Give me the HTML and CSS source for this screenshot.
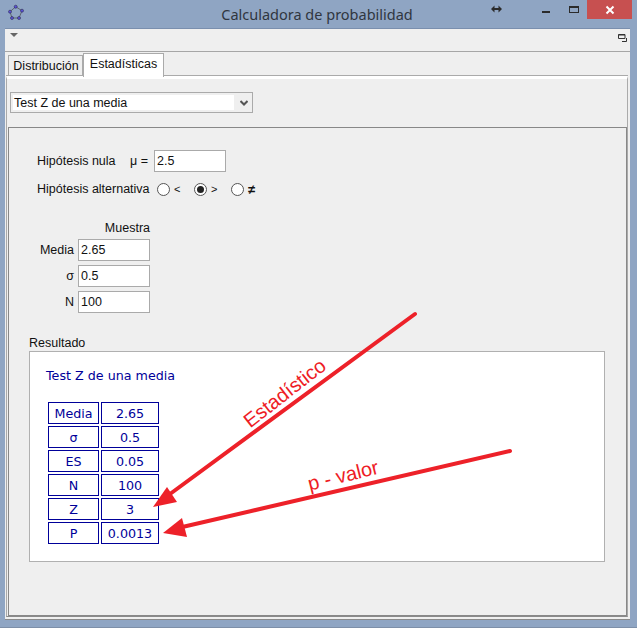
FILE: index.html
```html
<!DOCTYPE html>
<html lang="es">
<head>
    <meta charset="UTF-8">
    <meta name="viewport" content="width=device-width, initial-scale=1.0">
    <title>Calculadora de probabilidad</title>
    <link rel="stylesheet" href="styles.css">
</head>
<body>
    <div class="window">
        <div class="titlebar">
            <svg class="app-icon" width="18" height="18" viewBox="0 0 18 18">
                <path d="M8.7 2.7 L15 6.7 L12 14 L5 14 L3 7.7 Z" fill="none" stroke="#5f6670" stroke-width="1"/>
                <g fill="#5a50d8" stroke="#2c2c50" stroke-width="0.6">
                    <circle cx="8.7" cy="2.7" r="1.5"/>
                    <circle cx="15" cy="6.7" r="1.5"/>
                    <circle cx="12" cy="14" r="1.5"/>
                    <circle cx="5" cy="14" r="1.5"/>
                    <circle cx="3" cy="7.7" r="1.5"/>
                </g>
            </svg>
            <div class="title">Calculadora de probabilidad</div>
            <div class="controls">
                <svg class="ctl-resize" width="11" height="8" viewBox="0 0 11 8">
                    <path d="M0 4 L3.5 0.5 V3 H7.5 V0.5 L11 4 L7.5 7.5 V5 H3.5 V7.5 Z" fill="#2b2b2b"/>
                </svg>
                <span class="ctl-min"></span>
                <span class="ctl-max"></span>
                <div class="ctl-close">
                    <svg width="10" height="10" viewBox="0 0 10 10">
                        <path d="M1.5 1.5 L8.5 8.5 M8.5 1.5 L1.5 8.5" stroke="#fff" stroke-width="2"/>
                    </svg>
                </div>
            </div>
        </div>

        <div class="content">
            <div class="menubar">
                <span class="menu-arrow"></span>
                <svg width="9" height="8" viewBox="0 0 9 8">
                    <path d="M0.5 0.5 H7 V4.5 H0.5 Z M0.5 1 H7" fill="none" stroke="#333"/>
                    <path d="M8.5 4 V7.5 H4" fill="none" stroke="#333"/>
                </svg>
            </div>

            <div class="tabs">
                <div class="tab">Distribución</div>
                <div class="tab active">Estadísticas</div>
            </div>

            <div class="tab-pane">
                <div class="select">
                    <div class="select-value">Test Z de una media</div>
                    <svg width="8" height="6" viewBox="0 0 8 6">
                        <path d="M0.5 1 L4 4.5 L7.5 1" fill="none" stroke="#555" stroke-width="2"/>
                    </svg>
                </div>

                <div class="panel">
                    <div class="row">
                        <span class="lbl-null">Hipótesis nula</span>
                        <span class="lbl-mu">μ =</span>
                        <div class="field">2.5</div>
                    </div>
                    <div class="row row-alt">
                        <span class="lbl-alt">Hipótesis alternativa</span>
                        <span class="radio"></span><span class="radio-lbl">&lt;</span>
                        <span class="radio checked"></span><span class="radio-lbl">&gt;</span>
                        <span class="radio"></span><span class="radio-lbl neq">≠</span>
                    </div>

                    <div class="sample">
                        <span></span><span class="sample-head">Muestra</span>
                        <span class="sample-lbl">Media</span><div class="field">2.65</div>
                        <span class="sample-lbl">σ</span><div class="field">0.5</div>
                        <span class="sample-lbl">N</span><div class="field">100</div>
                    </div>

                    <div class="result-lbl">Resultado</div>
                    <div class="result">
                        <div class="result-title">Test Z de una media</div>
                        <table class="result-table">
                            <tr><td class="c-name">Media</td><td class="c-val">2.65</td></tr>
                            <tr><td class="c-name">σ</td><td class="c-val">0.5</td></tr>
                            <tr><td class="c-name">ES</td><td class="c-val">0.05</td></tr>
                            <tr><td class="c-name">N</td><td class="c-val">100</td></tr>
                            <tr><td class="c-name">Z</td><td class="c-val">3</td></tr>
                            <tr><td class="c-name">P</td><td class="c-val">0.0013</td></tr>
                        </table>
                    </div>
                </div>
            </div>
        </div>
    </div>

    <!-- red notes drawn over the window -->
    <svg class="arrows" width="639" height="630" viewBox="0 0 639 630">
        <g stroke="#ed2129" stroke-width="4" stroke-linecap="round" fill="none">
            <path d="M415 314 L170 494"/>
            <path d="M510 451 L178 528"/>
        </g>
        <g fill="#ed2129">
            <path d="M153 507 L167 487 L177 502 Z"/>
            <path d="M163 533 L182 518 L187 537 Z"/>
        </g>
    </svg>
    <div class="note note-stat">Estadístico</div>
    <div class="note note-p">p - valor</div>
</body>
</html>
```

FILE: styles.css
```css
html, body {
    margin: 0;
    padding: 0;
    background-color: #fff;
}
body {
    position: relative;
    width: 639px;
    height: 630px;
    overflow: hidden;
    font-family: "Liberation Sans", Arial, sans-serif;
    font-size: 12.5px;
    color: #111;
}
.window {
    width: 637px;
    height: 628px;
    box-sizing: border-box;
    padding: 0 7px 7px 5px;
    background-color: #8fa5c3;
    border-bottom: 1px solid #7d8fa8;
    display: flex;
    flex-direction: column;
}

/* title bar */
.titlebar {
    height: 28px;
    flex-shrink: 0;
    position: relative;
    display: flex;
    justify-content: center;
}
.app-icon {
    position: absolute;
    left: 2px;
    top: 4px;
}
.title {
    font-family: "Noto Sans", sans-serif;
    font-size: 14.5px;
    line-height: 28px;
    color: #30363f;
    margin-right: 1px;
}
.controls {
    position: absolute;
    left: 486px;
    top: 0;
    display: flex;
}
.ctl-resize {
    margin-top: 5px;
}
.ctl-min {
    width: 8px;
    height: 2px;
    margin: 11px 0 0 40px;
    background-color: #2b2b2b;
}
.ctl-max {
    width: 8px;
    height: 4px;
    margin: 6px 0 0 19px;
    border: 1px solid #2b2b2b;
    border-top-width: 2px;
}
.ctl-close {
    width: 45px;
    height: 19px;
    margin-left: 8px;
    background-color: #c75050;
    display: flex;
    align-items: center;
    justify-content: center;
}

/* window body */
.content {
    flex: 1;
    min-height: 0;
    background-color: #efefef;
    border-top: 1px solid #7a8fae;
    border-bottom: 1px solid #8a8a8a;
    display: flex;
    flex-direction: column;
}
.menubar {
    height: 23px;
    flex-shrink: 0;
    box-sizing: border-box;
    border-bottom: 1px solid #a6a6a6;
    padding: 5px 3px 0 5px;
    display: flex;
    justify-content: space-between;
    align-items: flex-start;
}
.menu-arrow {
    width: 0;
    height: 0;
    margin-top: -1px;
    border-left: 4px solid transparent;
    border-right: 4px solid transparent;
    border-top: 4px solid #666;
}

/* tabs */
.tabs {
    height: 24px;
    flex-shrink: 0;
    padding-left: 3px;
    display: flex;
    align-items: flex-end;
}
.tab {
    height: 21px;
    width: 75px;
    box-sizing: border-box;
    border: 1px solid #aaa;
    border-bottom: 0;
    padding-left: 1px;
    text-align: center;
    line-height: 21px;
    background-color: #efefef;
}
.tab.active {
    height: 24px;
    width: 81px;
    padding-left: 0;
    background-color: #fff;
    position: relative;
    top: 1px;
}
.tab-pane {
    flex: 1;
    min-height: 0;
    margin: 0 2px 2px 1px;
    border: 1px solid #aaa;
    border-bottom-color: #8a8a8a;
    border-top: 3px solid #fff;
    box-shadow: 0 -1px 0 #aaa;
    display: flex;
    flex-direction: column;
}
.select {
    width: 243px;
    height: 21px;
    box-sizing: border-box;
    margin: 13px 0 0 3px;
    border: 1px solid #aaa;
    padding: 2px 4px 2px 2px;
    display: flex;
    align-items: center;
    justify-content: space-between;
}
.select-value {
    width: 221px;
    height: 15px;
    line-height: 17px;
    padding-left: 1px;
    box-sizing: border-box;
    background-color: #fff;
}

/* main panel */
.panel {
    flex: 1;
    margin: 14px 0 0 1px;
    border: 1px solid #888;
    padding: 22px 0 0 28px;
    min-height: 0;
}
.row {
    display: flex;
    align-items: center;
}
.lbl-null {
    width: 93px;
}
.lbl-mu {
    width: 24px;
}
.lbl-alt {
    width: 120px;
}
.field {
    width: 72px;
    height: 22px;
    box-sizing: border-box;
    border: 1px solid #aaa;
    background-color: #fff;
    padding-left: 2px;
    line-height: 21px;
}
.row-alt {
    margin-top: 6px;
    height: 22px;
}
.radio {
    width: 13px;
    height: 13px;
    box-sizing: border-box;
    border: 1px solid #555;
    border-radius: 50%;
    background-color: #fff;
    display: inline-flex;
    align-items: center;
    justify-content: center;
}
.radio.checked::after {
    content: "";
    width: 7px;
    height: 7px;
    border-radius: 50%;
    background-color: #222;
}
.radio-lbl {
    width: 20px;
    margin-left: 4px;
    font-size: 11px;
}
.radio-lbl.neq {
    font-size: 13px;
    font-weight: bold;
}
.sample {
    margin: 13px 0 0 -2px;
    display: grid;
    grid-template-columns: 39px 72px;
    grid-auto-rows: 22px;
    row-gap: 4px;
    column-gap: 4px;
}
.sample-head {
    text-align: right;
    line-height: 17px;
    margin-top: 7px;
}
.sample-lbl {
    text-align: right;
    line-height: 23px;
}
.result-lbl {
    margin: 23px 0 0 -8px;
    line-height: 14px;
}
.result {
    width: 576px;
    height: 211px;
    box-sizing: border-box;
    margin: 1px 0 0 -8px;
    border: 1px solid #b0b0b0;
    background-color: #fff;
    padding: 16px 0 0 16px;
    font-family: "DejaVu Sans", sans-serif;
    color: #000099;
}
.result-title {
    font-size: 12.7px;
    line-height: 16px;
}
.result-table {
    margin-top: 16px;
    border-collapse: separate;
    border-spacing: 2px;
    font-size: 12.7px;
}
.result-table td {
    height: 22px;
    box-sizing: border-box;
    padding: 0;
    border: 1px solid #000099;
    text-align: center;
}
.c-name {
    width: 51px;
}
.c-val {
    width: 58px;
}

/* annotations */
.arrows {
    position: absolute;
    left: 0;
    top: 0;
}
.note {
    position: absolute;
    color: #ee1c25;
    font-size: 20px;
    line-height: 20px;
    white-space: nowrap;
    transform-origin: left center;
}
.note-stat {
    left: 246px;
    top: 413px;
    transform: rotate(-38deg);
}
.note-p {
    left: 308px;
    top: 474px;
    transform: rotate(-14deg);
}
```
